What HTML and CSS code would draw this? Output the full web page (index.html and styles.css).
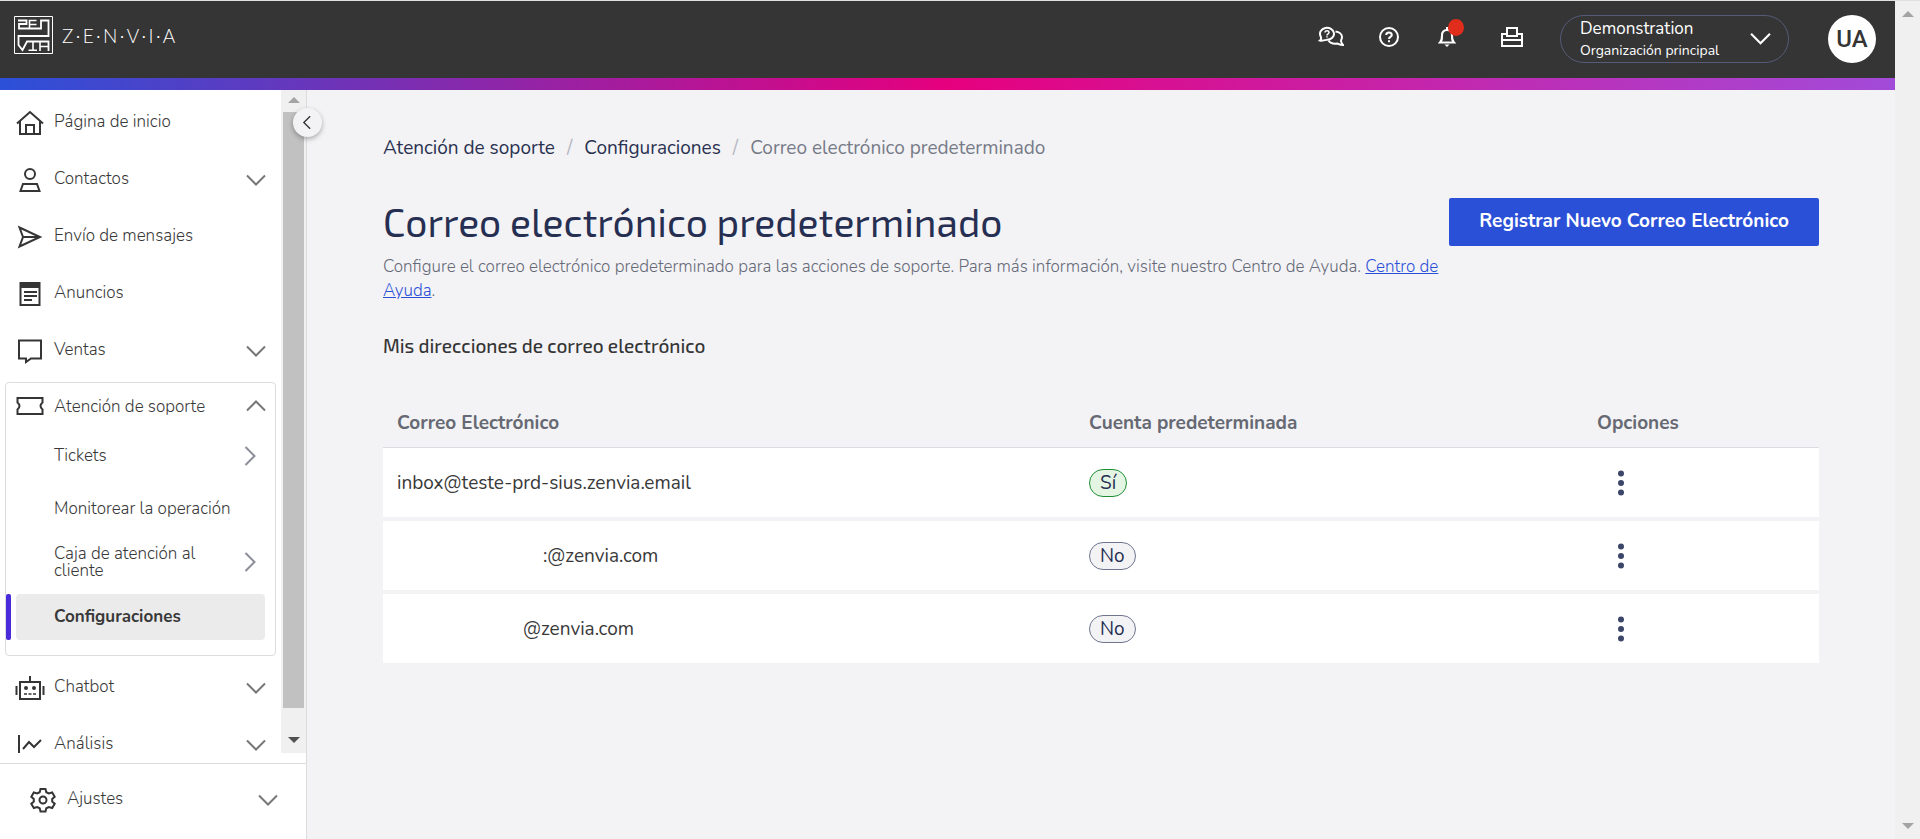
FILE: index.html
```html
<!DOCTYPE html>
<html lang="es">
<head>
    <meta charset="UTF-8">
    <meta name="viewport" content="width=device-width, initial-scale=1.0">
    <title>Correo electrónico predeterminado</title>
    <link rel="stylesheet" href="styles.css">
</head>
<body>
    <!-- Shared icons -->
    <svg class="sprite" aria-hidden="true">
        <symbol id="chevron" viewBox="0 0 20 12"><path d="M1 1.5l9 9 9-9" fill="none" stroke="currentColor" stroke-width="2"/></symbol>
        <symbol id="dots" viewBox="0 0 6 26"><circle cx="3" cy="3.5" r="3"/><circle cx="3" cy="13" r="3"/><circle cx="3" cy="22.5" r="3"/></symbol>
    </svg>

    <div class="page">
        <header class="topbar">
            <a class="logo" href="#" aria-label="Zenvia">
                <svg class="logo-mark" viewBox="0 0 39 38" fill="none" stroke="#fff">
                    <path d="M.5.5h38v37H.5z"/>
                    <path d="M4 4.500h8.500V8H5v4.500h22V4.500h7.500V20H4.500v9l4 5 4.500-8.500h21.500V35" stroke-width="1.800"/>
                    <path d="M22.500 4.500h-7v4h7M15.500 4.500v8M19 25.500V34M14.500 34.200h8.500M26 35v-9.500M26 30.500h8.500" stroke-width="1.600"/>
                </svg>
                <span class="logo-text">Z&thinsp;·&thinsp;E&thinsp;·&thinsp;N&thinsp;·&thinsp;V&thinsp;·&thinsp;I&thinsp;·&thinsp;A</span>
            </a>

            <div class="topbar-actions">
                <button class="icon-btn" type="button" aria-label="Chat">
                    <svg width="26" height="22" viewBox="0 0 26 22" fill="none" stroke="#fff" stroke-width="2">
                        <path d="M2 14.500C4 13 3 11.500 2.500 10A7 6 0 1 1 9 13.800C6 14.500 4 15 2 14.500z"/>
                        <path d="M17.500 5.500c4 .5 6.500 3 6.500 5.500 0 2-1 3-1 4 .2 1.800 1 3 2 4-3 0-4-.8-5.500-1.500-4 .5-7.500-.5-9-3"/>
                        <path d="M7 6.500c0-2.500 4-2.500 4 0 0 1.500-2 1.200-2 3M9 10.200v1.300" stroke-width="1.500"/>
                    </svg>
                </button>
                <button class="icon-btn" type="button" aria-label="Ayuda">
                    <svg width="20" height="20" viewBox="0 0 20 20" fill="none" stroke="#fff" stroke-width="2">
                        <circle cx="10" cy="10" r="9"/>
                        <path d="M7.200 8c0-3.500 5.600-3.500 5.600 0 0 2-2.800 1.800-2.800 4M10 13.300v2"/>
                    </svg>
                </button>
                <button class="icon-btn" type="button" aria-label="Notificaciones">
                    <svg width="18" height="20" viewBox="0 0 18 20" fill="none" stroke="#fff" stroke-width="2">
                        <path d="M2 15.500c2-2 2-3 2-7C4 5 6 3 9 3s5 2 5 5.500c0 4 0 5 2 7zM9 0v3"/>
                        <path d="M6.500 17.500h5L9 20z" fill="#fff" stroke="none"/>
                    </svg>
                    <span class="notice-dot"></span>
                </button>
                <button class="icon-btn print" type="button" aria-label="Imprimir">
                    <svg width="22" height="20" viewBox="0 0 22 20" fill="none" stroke="#fff" stroke-width="2">
                        <path d="M6 9V1h10v8z"/>
                        <path d="M5 7H1v12h20V7h-4M1 13h20"/>
                    </svg>
                </button>
            </div>

            <button class="org" type="button">
                <span class="org-text">
                    <span class="org-name">Demonstration</span>
                    <span class="org-sub">Organización principal</span>
                </span>
                <svg class="org-arrow"><use href="#chevron"/></svg>
            </button>
            <button class="avatar" type="button">UA</button>
        </header>

        <div class="body">
            <aside class="sidebar">
                <div class="menu-wrap">
                    <nav class="menu">
                        <a class="item" href="#">
                            <svg class="icon" viewBox="0 0 30 26"><path d="M2 13.500L15 2l13 11.500M5 11.500V24h20V11.500M11 24v-9h8v9"/></svg>
                            <span class="label">Página de inicio</span>
                        </a>
                        <a class="item" href="#">
                            <svg class="icon" viewBox="0 0 30 26"><circle cx="15" cy="7" r="5"/><path d="M8 17h14l2.500 7h-19z"/></svg>
                            <span class="label">Contactos</span>
                            <svg class="arrow"><use href="#chevron"/></svg>
                        </a>
                        <a class="item" href="#">
                            <svg class="icon" viewBox="0 0 30 26"><path d="M4.500 3.500L25 13 4.500 22.500 8 13zM8 13h16"/></svg>
                            <span class="label">Envío de mensajes</span>
                        </a>
                        <a class="item" href="#">
                            <svg class="icon" viewBox="0 0 30 26"><path d="M5.500 2h19v22h-19zM5 4h20M5 6h20M9 11h13M9 15h13M9 19h8"/></svg>
                            <span class="label">Anuncios</span>
                        </a>
                        <a class="item" href="#">
                            <svg class="icon" viewBox="0 0 30 26"><path d="M4 2.500h22v18H16l-5 3.500v-3.500H4z"/></svg>
                            <span class="label">Ventas</span>
                            <svg class="arrow"><use href="#chevron"/></svg>
                        </a>

                        <div class="group">
                            <a class="item" href="#">
                                <svg class="icon" viewBox="0 0 30 26"><path d="M2.500 5h25v4.500q-4 3.500 0 7V21h-25v-4.500q4-3.500 0-7z"/></svg>
                                <span class="label">Atención de soporte</span>
                                <svg class="arrow up"><use href="#chevron"/></svg>
                            </a>
                            <a class="sub" href="#">
                                <span class="label">Tickets</span>
                                <svg class="arrow right"><use href="#chevron"/></svg>
                            </a>
                            <a class="sub" href="#">
                                <span class="label">Monitorear la operación</span>
                            </a>
                            <a class="sub" href="#">
                                <span class="label">Caja de atención al cliente</span>
                                <svg class="arrow right"><use href="#chevron"/></svg>
                            </a>
                            <a class="sub active" href="#">
                                <span class="label">Configuraciones</span>
                            </a>
                        </div>

                        <a class="item" href="#">
                            <svg class="icon" viewBox="0 0 30 26"><path d="M5 7h20v17H5zM15 1v6M1.500 11v9M28.500 11v9"/><path d="M9 19h3M13.500 19h3M18 19h3" stroke-width="1.500"/><circle cx="11" cy="13" r="1"/><circle cx="19" cy="13" r="1"/></svg>
                            <span class="label">Chatbot</span>
                            <svg class="arrow"><use href="#chevron"/></svg>
                        </a>
                        <a class="item" href="#">
                            <svg class="icon" viewBox="0 0 30 26"><path d="M4 3v19M8 17l6-7 5 5 7-7"/></svg>
                            <span class="label">Análisis</span>
                            <svg class="arrow"><use href="#chevron"/></svg>
                        </a>
                    </nav>
                    <div class="scroll">
                        <span class="tri tri-up"></span>
                        <span class="thumb"></span>
                        <span class="tri tri-down dark"></span>
                    </div>
                </div>

                <a class="item settings" href="#">
                    <svg class="icon" viewBox="0 0 30 26"><path d="M12.500 2h5l.8 3.200 2.500 1.300 3.400-1 2.500 4.200-2.500 2.300v2.500l2.500 2.300-2.500 4.200-3.400-1-2.500 1.300-.8 3.200h-5l-.8-3.200-2.500-1.300-3.400 1-2.500-4.200 2.500-2.300v-2.500L3.300 9.700l2.500-4.200 3.400 1 2.500-1.300z"/><circle cx="15" cy="13" r="3.500"/></svg>
                    <span class="label">Ajustes</span>
                    <svg class="arrow"><use href="#chevron"/></svg>
                </a>
                <button class="collapse" type="button" aria-label="Contraer menú">
                    <svg><use href="#chevron"/></svg>
                </button>
            </aside>

            <main class="content">
                <nav class="breadcrumb">
                    <a href="#">Atención de soporte</a>
                    <span class="slash">/</span>
                    <a href="#">Configuraciones</a>
                    <span class="slash">/</span>
                    <span class="current">Correo electrónico predeterminado</span>
                </nav>

                <div class="heading">
                    <div class="heading-text">
                        <h1>Correo electrónico predeterminado</h1>
                        <p>Configure el correo electrónico predeterminado para las acciones de soporte. Para más información, visite nuestro Centro de Ayuda. <a href="#">Centro de Ayuda</a>.</p>
                    </div>
                    <button class="primary" type="button">Registrar Nuevo Correo Electrónico</button>
                </div>

                <h2>Mis direcciones de correo electrónico</h2>

                <table class="emails">
                    <thead>
                        <tr>
                            <th>Correo Electrónico</th>
                            <th class="col-default">Cuenta predeterminada</th>
                            <th class="col-options">Opciones</th>
                        </tr>
                    </thead>
                    <tbody>
                        <tr>
                            <td>inbox@teste-prd-sius.zenvia.email</td>
                            <td><span class="badge yes">Sí</span></td>
                            <td><button class="more" type="button" aria-label="Opciones"><svg><use href="#dots"/></svg></button></td>
                        </tr>
                        <tr>
                            <td class="masked-long">:@zenvia.com</td>
                            <td><span class="badge">No</span></td>
                            <td><button class="more" type="button" aria-label="Opciones"><svg><use href="#dots"/></svg></button></td>
                        </tr>
                        <tr>
                            <td class="masked-short">@zenvia.com</td>
                            <td><span class="badge">No</span></td>
                            <td><button class="more" type="button" aria-label="Opciones"><svg><use href="#dots"/></svg></button></td>
                        </tr>
                    </tbody>
                </table>
            </main>
        </div>
    </div>

    <div class="scroll page-scroll">
        <span class="tri tri-up"></span>
        <span class="tri tri-down"></span>
    </div>
</body>
</html>
```
FILE: styles.css
```css
* {
    box-sizing: border-box;
}

body {
    margin: 0;
    height: 100vh;
    display: flex;
    overflow: hidden;
    border-top: 1px solid #dfe1e1;
    background-color: #f3f3f5;
    font-family: 'Nunito', 'Open Sans', sans-serif;
    font-size: 17px;
    color: #393939;
}

a {
    color: inherit;
    text-decoration: none;
}

button {
    font-family: inherit;
    border: none;
    padding: 0;
    background: none;
    cursor: pointer;
}

.sprite {
    position: absolute;
    width: 0;
    height: 0;
}

.page {
    flex: 1;
    display: flex;
    flex-direction: column;
    min-width: 0;
}

/* Top bar */
.topbar {
    display: flex;
    align-items: center;
    height: 89px;
    padding: 0 19px 13px 14px;
    background: linear-gradient(90deg, #2b50d8, #e6007e 50%, #a24bd9) bottom / 100% 12px no-repeat #353535;
    color: #fff;
}

.logo {
    display: flex;
    align-items: center;
    gap: 9px;
    margin-right: auto;
    padding-bottom: 8px;
}

.logo-mark {
    width: 39px;
    height: 38px;
}

.logo-text {
    font-family: 'Lato', sans-serif;
    font-weight: 300;
    font-size: 19px;
}

.topbar-actions {
    display: flex;
    align-items: center;
    gap: 32px;
    margin-right: 35px;
    padding-bottom: 4px;
}

.icon-btn {
    display: flex;
    justify-content: center;
    position: relative;
    width: 26px;
}

.icon-btn.print {
    margin-left: 7px;
}

.notice-dot {
    position: absolute;
    top: -8px;
    right: -4px;
    width: 16px;
    height: 17px;
    border-radius: 50%;
    background-color: #e12d1b;
}

.org {
    display: flex;
    align-items: center;
    justify-content: space-between;
    width: 229px;
    height: 48px;
    padding: 2px 17px 0 19px;
    margin-right: 39px;
    border: 1px solid #555b78;
    border-radius: 24px;
    color: #fff;
    text-align: left;
}

.org-name,
.org-sub {
    display: block;
    line-height: 22px;
}

.org-name {
    font-size: 17px;
}

.org-sub {
    font-size: 14px;
}

.org-arrow {
    width: 21px;
    height: 13px;
    margin-bottom: 4px;
}

.avatar {
    width: 48px;
    height: 48px;
    border-radius: 50%;
    background-color: #fff;
    color: #353535;
    font-family: 'Roboto', sans-serif;
    font-size: 24px;
    font-weight: 500;
}

/* Sidebar */
.body {
    flex: 1;
    display: flex;
    min-height: 0;
}

.sidebar {
    position: relative;
    display: flex;
    flex-direction: column;
    flex: none;
    width: 307px;
    border-right: 1px solid #dcdcdc;
    background-color: #fff;
}

.menu-wrap {
    flex: 1;
    display: flex;
    min-height: 0;
    margin-bottom: 10px;
}

.menu {
    flex: 1;
    padding: 4px 5px 0;
    overflow: hidden;
}

.item {
    display: flex;
    align-items: center;
    height: 57px;
    padding: 0 10px;
}

.item .label {
    padding-bottom: 2px;
}

.icon {
    flex: none;
    width: 30px;
    height: 26px;
    margin-right: 9px;
    fill: none;
    stroke: #353535;
    stroke-width: 2;
}

.label {
    flex: 1;
    font-weight: 350;
}

.arrow {
    width: 20px;
    height: 12px;
    color: #777;
}

.arrow.up {
    transform: rotate(180deg);
}

.arrow.right {
    color: #8b8d98;
    transform: rotate(-90deg);
}

.group {
    margin: 3px 0;
    padding-bottom: 15px;
    border: 1px solid #dcdcdc;
    border-radius: 4px;
}

.group .item {
    height: 46px;
    padding: 0 9px;
}

.group .item .label {
    padding-bottom: 0;
}

.sub {
    display: flex;
    align-items: center;
    height: 53px;
    padding: 0 15px 0 48px;
    line-height: 17px;
}

.sub.active {
    position: relative;
    height: 46px;
    margin: 6px 10px 0;
    padding: 0 0 2px 38px;
    border-radius: 4px;
    background-color: #ebebeb;
}

.sub.active .label {
    font-weight: 700;
}

.sub.active::before {
    content: '';
    position: absolute;
    top: 0;
    left: -10px;
    width: 5px;
    height: 46px;
    border-radius: 2px;
    background-color: #4a2bdb;
}

.settings {
    flex: none;
    height: 76px;
    padding: 0 28px 4px;
    border-top: 1px solid #dcdcdc;
}

.collapse {
    position: absolute;
    top: 18px;
    right: -16px;
    width: 29px;
    height: 29px;
    border-radius: 50%;
    background-color: #f3f3f5;
    box-shadow: 0 2px 5px rgba(0, 0, 0, 0.3);
    color: #353535;
}

.collapse svg {
    display: block;
    width: 14px;
    height: 9px;
    margin-left: 7px;
    transform: rotate(90deg);
}

/* Scrollbars */
.scroll {
    display: flex;
    flex-direction: column;
    align-items: center;
    justify-content: space-between;
    width: 25px;
    padding: 7px 0 10px;
    background-color: #f0f0f0;
}

.page-scroll {
    padding: 10px 0;
}

.thumb {
    flex: 1;
    width: 21px;
    margin: 9px 0 29px;
    background-color: #c1c1c1;
}

.tri {
    border: 6px solid transparent;
}

.tri-up {
    border-top: 0;
    border-bottom-color: #a3a3a3;
}

.tri-down {
    border-bottom: 0;
    border-top-color: #a3a3a3;
}

.tri-down.dark {
    border-top-color: #505050;
}

/* Content */
.content {
    flex: 1;
    min-width: 0;
    padding: 44px 76px 0;
}

.breadcrumb {
    display: flex;
    gap: 12px;
    line-height: 28px;
    font-size: 19px;
    color: #2a3150;
}

.slash {
    color: #b5b7c2;
}

.current {
    color: #777b88;
}

.heading {
    display: flex;
    align-items: flex-start;
    margin-top: 36px;
}

.heading-text {
    flex: 1;
}

h1 {
    margin: 0 0 9px;
    font-family: 'Exo 2', 'Open Sans', sans-serif;
    font-size: 39px;
    font-weight: 400;
    line-height: 48px;
    color: #262f52;
}

.heading p {
    margin: 0;
    font-weight: 300;
    line-height: 24px;
    color: #666a78;
}

.heading p a {
    color: #2b50d8;
    text-decoration: underline;
}

.primary {
    flex: none;
    height: 48px;
    padding: 0 30px 2px;
    border-radius: 2px;
    background-color: #2b50d8;
    color: #fff;
    font-size: 19px;
    font-weight: 700;
}

h2 {
    margin: 29px 0 36px;
    font-family: 'Exo 2', 'Open Sans', sans-serif;
    font-size: 19px;
    font-weight: 500;
    line-height: 28px;
    color: #353535;
}

.emails {
    width: 100%;
    border-spacing: 0;
    table-layout: fixed;
    font-size: 19px;
}

.emails th {
    height: 52px;
    padding: 2px 14px 0;
    border-bottom: 1px solid #dcdce0;
    text-align: left;
    font-weight: 700;
    color: #666973;
}

.col-default {
    width: 508px;
}

.col-options {
    width: 236px;
}

.emails td {
    height: 73px;
    padding: 0 14px;
    border-bottom: 4px solid #f3f3f5;
    background-color: #fff;
}

.emails .masked-long {
    padding-left: 160px;
}

.emails .masked-short {
    padding-left: 140px;
}

.badge {
    display: inline-block;
    padding: 0 10px;
    border: 1px solid #70758f;
    border-radius: 14px;
    background-color: #f3f3f5;
    line-height: 26px;
    color: #262f52;
}

.badge.yes {
    border-color: #1f8f36;
    background-color: #e4f5e4;
}

.more {
    display: block;
    margin-left: 21px;
}

.more svg {
    display: block;
    width: 6px;
    height: 26px;
    fill: #3b4669;
}
```
